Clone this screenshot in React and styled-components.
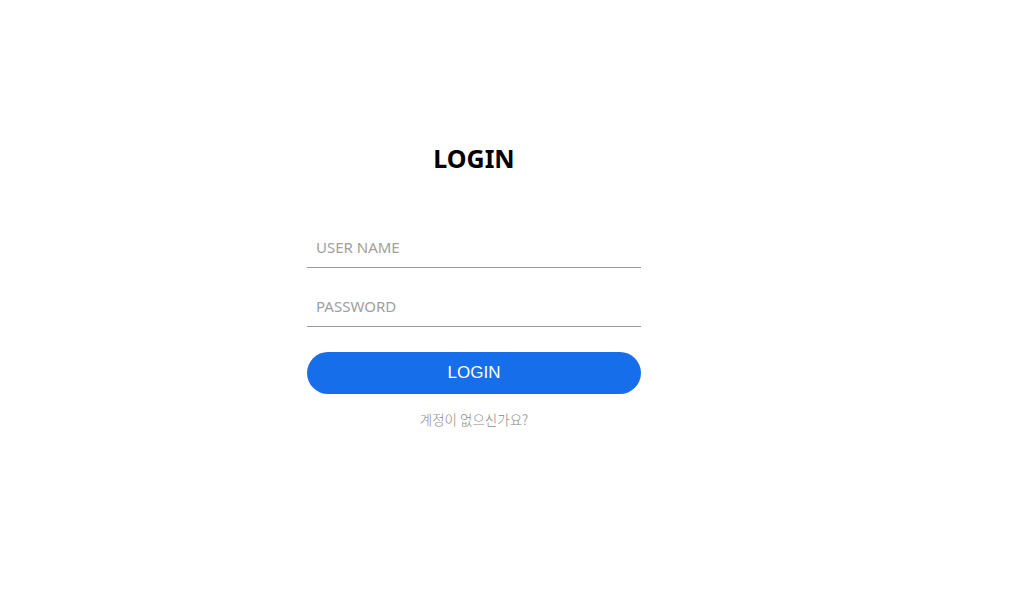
import React from "react";
import styled, { createGlobalStyle } from "styled-components";

const GlobalStyle = createGlobalStyle`
  body {
    margin: 0;
    background: #fff;
    font-family: "Noto Sans", "Noto Sans CJK KR", sans-serif;
  }
`;

const Page = styled.div`
  width: 948px;
  display: flex;
  flex-direction: column;
  align-items: center;
  padding-top: 141px;
`;

const Form = styled.form`
  width: 334px;
  display: flex;
  flex-direction: column;
  align-items: stretch;
`;

const Title = styled.h1`
  margin: 0 0 53px;
  height: 34px;
  line-height: 34px;
  font-size: 25px;
  font-weight: 700;
  text-align: center;
  color: #000;
`;

const Input = styled.input`
  box-sizing: border-box;
  height: 40px;
  margin-bottom: ${(p) => p.$gap}px;
  padding: 0 9px 2px;
  border: none;
  border-bottom: 1px solid #9a9a9a;
  outline: none;
  font-family: "Noto Sans", "Noto Sans CJK KR", sans-serif;
  font-size: 15px;
  color: #333;
  background: transparent;

  &::placeholder {
    color: #a0a0a0;
  }
`;

const Button = styled.button`
  height: 42px;
  border: none;
  border-radius: 21px;
  background: #176eeb;
  color: #fff;
  font-family: "Liberation Sans", Arial, sans-serif;
  font-size: 17px;
  cursor: pointer;
`;

const SignUp = styled.a`
  margin-top: 15px;
  text-align: center;
  font-family: "Noto Sans CJK KR", sans-serif;
  font-size: 13.5px;
  font-weight: 300;
  color: #8a8a8a;
  text-decoration: none;
`;

export default function App() {
  return (
    <>
      <GlobalStyle />
      <Page>
        <Form onSubmit={(e) => e.preventDefault()}>
          <Title>LOGIN</Title>
          <Input placeholder="USER NAME" $gap={19} />
          <Input type="password" placeholder="PASSWORD" $gap={25} />
          <Button type="submit">LOGIN</Button>
          <SignUp href="#">계정이 없으신가요?</SignUp>
        </Form>
      </Page>
    </>
  );
}
